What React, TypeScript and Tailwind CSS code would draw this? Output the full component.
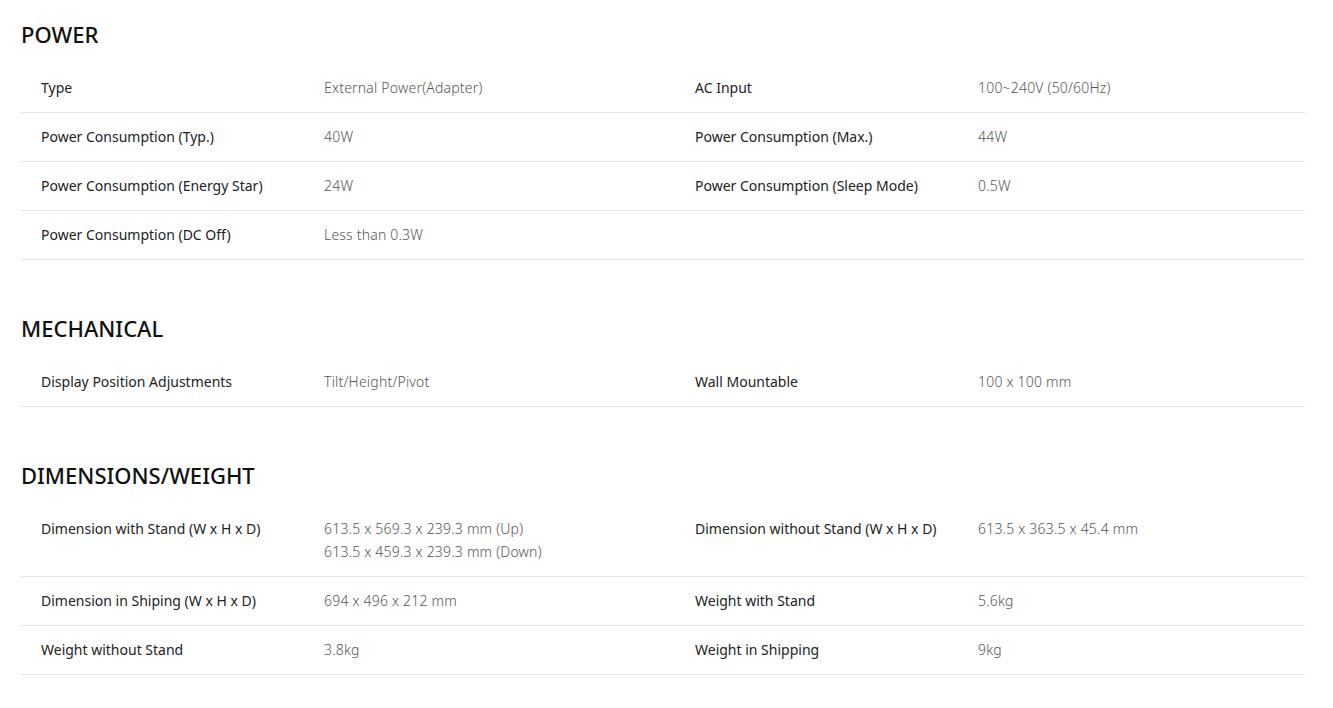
type Row = [string, string | string[], string?, (string | string[])?];

const sections: { title: string; rows: Row[] }[] = [
  {
    title: "POWER",
    rows: [
      ["Type", "External Power(Adapter)", "AC Input", "100~240V (50/60Hz)"],
      ["Power Consumption (Typ.)", "40W", "Power Consumption (Max.)", "44W"],
      ["Power Consumption (Energy Star)", "24W", "Power Consumption (Sleep Mode)", "0.5W"],
      ["Power Consumption (DC Off)", "Less than 0.3W"],
    ],
  },
  {
    title: "MECHANICAL",
    rows: [["Display Position Adjustments", "Tilt/Height/Pivot", "Wall Mountable", "100 x 100 mm"]],
  },
  {
    title: "DIMENSIONS/WEIGHT",
    rows: [
      [
        "Dimension with Stand (W x H x D)",
        ["613.5 x 569.3 x 239.3 mm (Up)", "613.5 x 459.3 x 239.3 mm (Down)"],
        "Dimension without Stand (W x H x D)",
        "613.5 x 363.5 x 45.4 mm",
      ],
      ["Dimension in Shiping (W x H x D)", "694 x 496 x 212 mm", "Weight with Stand", "5.6kg"],
      ["Weight without Stand", "3.8kg", "Weight in Shipping", "9kg"],
    ],
  },
];

function Value({ v }: { v?: string | string[] }) {
  if (!v) return <div />;
  const lines = Array.isArray(v) ? v : [v];
  return (
    <div className="font-light text-[#555] tracking-[0.2px]">
      {lines.map((l) => (
        <div key={l}>{l}</div>
      ))}
    </div>
  );
}

export default function App() {
  return (
    <div
      className="min-h-screen bg-white px-[21px] pt-[19px] pr-[28px]"
      style={{ fontFamily: '"Noto Sans", "Open Sans", sans-serif' }}
    >
      {sections.map((s, i) => (
        <section key={s.title} className={i > 0 ? "mt-[53px]" : ""}>
          <h2 className="text-[22px] leading-[30px] text-[#111] font-medium">{s.title}</h2>
          <div className="mt-[15px]">
            {s.rows.map((r) => (
              <div
                key={r[0]}
                className="grid grid-cols-[283px_371px_283px_1fr] border-b border-[#e4e4e4] pl-5 pt-[12px] pb-[13px] text-[14px] leading-[23px]"
              >
                <div className="text-[#222]">{r[0]}</div>
                <Value v={r[1]} />
                <div className="text-[#222]">{r[2] ?? ""}</div>
                <Value v={r[3]} />
              </div>
            ))}
          </div>
        </section>
      ))}
    </div>
  );
}
